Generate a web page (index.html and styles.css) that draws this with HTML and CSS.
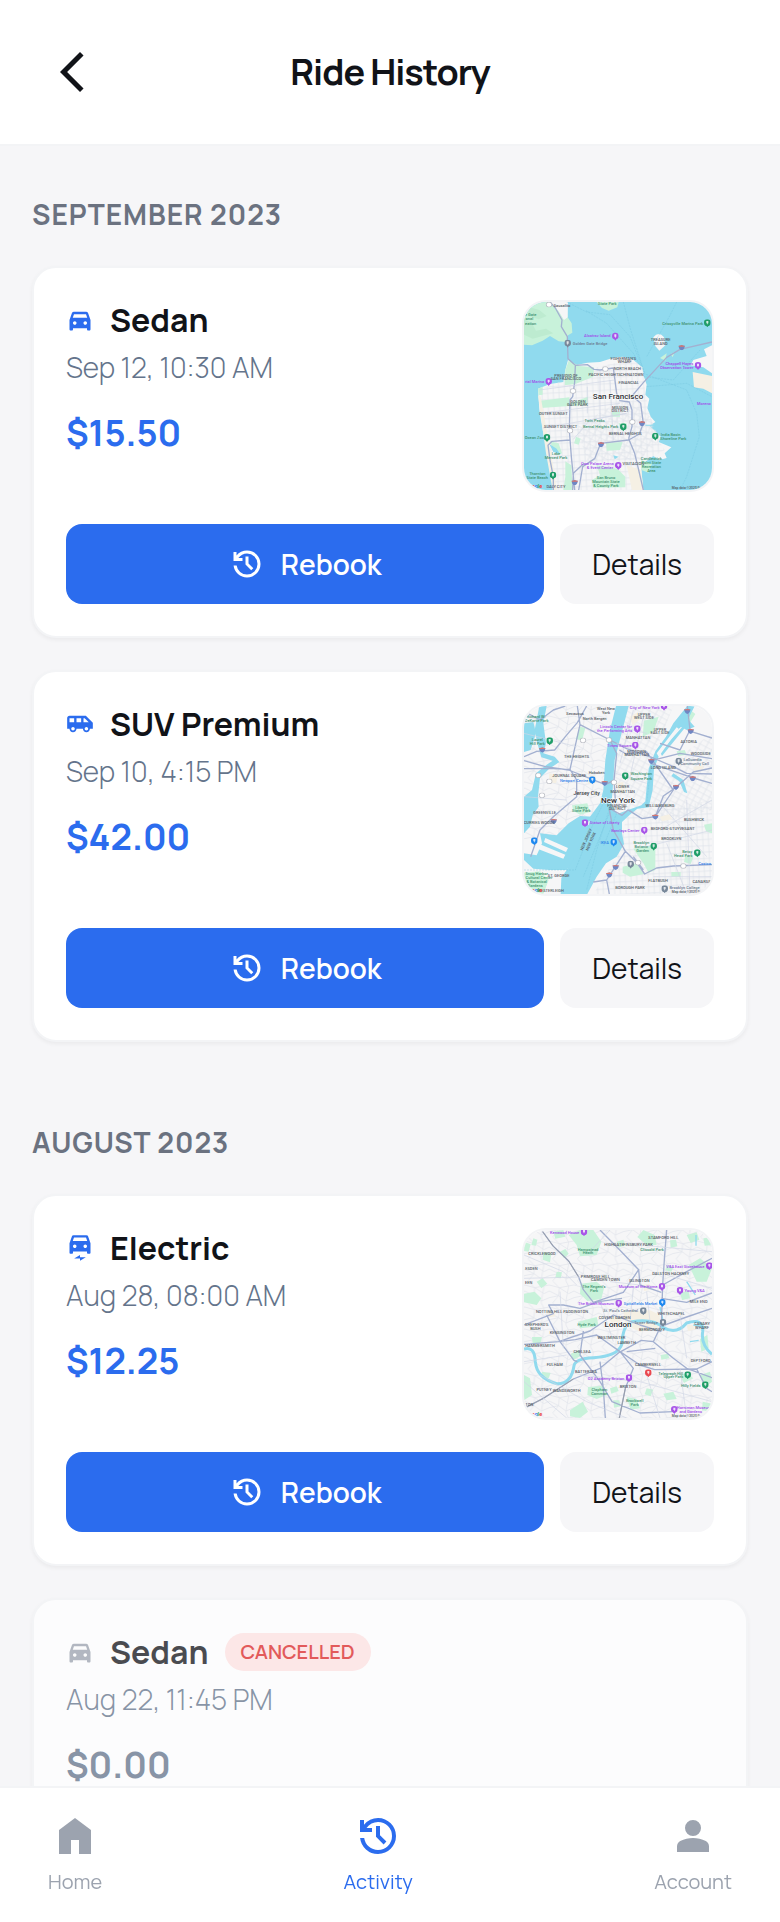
FILE: index.html
```html
<!DOCTYPE html>
<html lang="en">
<head>
    <meta charset="UTF-8">
    <meta name="viewport" content="width=device-width, initial-scale=1.0">
    <title>Ride History</title>
    <link rel="stylesheet" href="styles.css">
</head>
<body>
    <!-- Shared icons and street patterns -->
    <svg class="sprite" aria-hidden="true">
        <symbol id="icon-history" viewBox="0 0 24 24">
            <path d="M12 21q-3.45 0-6.012-2.287T3.05 13H5.1q.35 2.6 2.313 4.3T12 19q2.925 0 4.963-2.037T19 12t-2.037-4.962T12 5q-1.725 0-3.225.8T6.25 8H9v2H3V4h2v2.35q1.275-1.6 3.113-2.475T12 3q1.875 0 3.513.713t2.85 1.924 1.925 2.85T21 12t-.712 3.513-1.925 2.85-2.85 1.925T12 21m2.8-4.8L11 12.4V7h2v4.6l3.2 3.2z"/>
        </symbol>
        <symbol id="icon-car" viewBox="0 0 24 24">
            <path d="M6 19v1q0 .425-.287.713T5 21H4q-.425 0-.712-.288T3 20v-8l2.1-6q.15-.45.538-.725T6.5 5h11q.475 0 .863.275T18.9 6l2.1 6v8q0 .425-.287.713T20 21h-1q-.425 0-.712-.288T18 20v-1zm-.2-9h12.4l-1.05-3H6.85zm1.7 6q.625 0 1.063-.437T9 14.5t-.437-1.062T7.5 13t-1.062.438T6 14.5t.438 1.063T7.5 16m9 0q.625 0 1.063-.437T18 14.5t-.437-1.062T16.5 13t-1.062.438T15 14.5t.438 1.063T16.5 16"/>
        </symbol>
        <symbol id="icon-van" viewBox="0 0 24 24">
            <path d="M17 5H3c-1.1 0-2 .89-2 2v9h2c0 1.65 1.34 3 3 3s3-1.35 3-3h5.5c0 1.65 1.34 3 3 3s3-1.35 3-3H23v-5zM3 10.500V7h4v3.500zm3 7c-.83 0-1.500-.67-1.500-1.500s.67-1.500 1.500-1.500 1.500.67 1.500 1.500-.67 1.500-1.500 1.500m7-7H9V7h4zm4.500 7c-.83 0-1.500-.67-1.500-1.500s.67-1.500 1.500-1.500 1.500.67 1.500 1.500-.67 1.500-1.500 1.500M15 10.500V7h1l3.500 3.500z"/>
        </symbol>
        <symbol id="icon-electric" viewBox="0 0 24 24">
            <path d="M6 15v1q0 .425-.287.713T5 17H4q-.425 0-.712-.288T3 16V8l2.1-6q.15-.45.538-.725T6.5 1h11q.475 0 .863.275T18.9 2L21 8v8q0 .425-.287.713T20 17h-1q-.425 0-.712-.288T18 16v-1zm-.2-9h12.4l-1.05-3H6.85zm1.7 6q.625 0 1.063-.437T9 10.5t-.437-1.062T7.5 9t-1.062.438T6 10.5t.438 1.063T7.5 12m9 0q.625 0 1.063-.437T18 10.5t-.437-1.062T16.5 9t-1.062.438T15 10.5t.438 1.063T16.5 12M7 21l5-3v2h5l-5 3v-2z"/>
        </symbol>
        <symbol id="shield" viewBox="0 0 20 16">
            <path fill="#6f87c4" d="M1 2q4 1 9-2 5 3 9 2 1 10-9 14Q0 12 1 2"/>
            <path fill="#d9776e" d="M1 2q4 1 9-2 5 3 9 2v3H1z"/>
        </symbol>
        <symbol id="route" viewBox="0 0 20 16">
            <rect x="2" y="1" width="16" height="14" rx="6" fill="#fff" stroke="#a4a8b0" stroke-width="2"/>
        </symbol>
        <symbol id="pin" viewBox="0 0 20 24">
            <circle cx="10" cy="10" r="10"/>
            <path d="M5 17h10l-5 7z"/>
            <path fill="#fff" fill-opacity=".8" d="M7 5h6v7h-2v3H9v-3H7z"/>
        </symbol>
        <defs>
            <pattern id="streets" width="17" height="19" patternUnits="userSpaceOnUse" patternTransform="rotate(-3)">
                <path class="street" d="M0 5H17M6 0V19"/>
            </pattern>
            <pattern id="streets-tilted" width="20" height="16" patternUnits="userSpaceOnUse" patternTransform="rotate(28)">
                <path class="street" d="M0 5H20M6 0V16"/>
            </pattern>
            <pattern id="streets-loose" width="74" height="66" patternUnits="userSpaceOnUse">
                <path class="street" d="M0 12L30 20 74 12M0 50L28 44 50 60 74 50M10 0L30 20 28 44 10 66M50 0L58 16 50 60 50 66M30 20L58 38 74 30M0 30L28 44"/>
            </pattern>
        </defs>
    </svg>

    <header class="header">
        <button class="back-btn" type="button" aria-label="Back">
            <svg viewBox="0 0 24 24" aria-hidden="true"><path d="M16 22 6 12 16 2l1.775 1.775L9.55 12l8.225 8.225z"/></svg>
        </button>
        <h1>Ride History</h1>
    </header>

    <main class="content">
        <section class="month">
            <h2>September 2023</h2>

            <article class="card">
                <div class="card-top">
                    <div class="ride-info">
                        <div class="ride-title">
                            <svg class="ride-icon" aria-hidden="true"><use href="#icon-car"/></svg>
                            <h3>Sedan</h3>
                        </div>
                        <p class="ride-date">Sep 12, 10:30 AM</p>
                        <p class="ride-price">$15.50</p>
                    </div>
                    <svg class="map" viewBox="72 66 564 564" role="img" aria-label="Map of San Francisco">
                        <rect class="water" x="72" y="66" width="564" height="564"/>
                        <!-- Marin headlands -->
                        <path class="park" d="M72 66H200L203 112 215 130 217 158 204 166 198 186 176 184 150 168 128 182 96 196 72 194z"/>
                        <path class="land" d="M152 66H204L203 112 192 120 176 94z"/>
                        <path class="park" d="M290 66H356L352 82 326 92 306 84z"/>
                        <path fill="#bdebd0" d="M72 118L96 130 108 152 138 146 160 160 128 168 98 176 72 164zM84 80L118 90 140 108 116 118 88 108z"/>
                        <!-- City peninsula -->
                        <path class="land" d="M204 240L226 256 262 248 300 246 338 234 368 230 398 238 414 252 428 262 432 290 440 314 436 344 448 356 442 384 452 410 466 426 448 438 464 452 482 470 476 486 514 502 494 520 500 534 478 540 460 528 444 540 430 548 424 570 430 630H160L152 570 140 510 128 450 118 390 114 326 150 312 190 306 196 270z"/>
                        <path fill="url(#streets)" d="M190 300L262 268 398 238 428 262 436 344 452 410 470 470 494 510 424 550 424 630H170L130 450 116 330z"/>
                        <path fill="url(#streets-tilted)" d="M230 440L380 350 450 410 480 480 420 540 260 540z"/>
                        <path class="park" d="M120 362L208 352 210 370 264 350 264 376 208 378 122 384zM196 270L206 242 240 258 282 262 280 290 226 312 194 316zM114 326L128 320 128 344 116 346zM150 484L176 490 186 520 174 526 160 512zM318 488L368 486 360 510 320 512zM290 556L352 566 376 590 376 622 280 624 276 600 300 586zM424 540L456 552 446 578 424 570zM196 544L214 556 218 630 190 630 196 590zM356 430L380 430 380 448 360 446zM336 396h24v14h-24zM228 470l14 6-6 18-14-4z"/>
                        <path class="sand" d="M114 346L122 350 160 560 170 630H158L138 520zM380 556L424 570 430 630H396z"/>
                        <path class="water" d="M148 492L170 506 180 522 160 516zM436 434h30v3h-30zM340 526l16 4-12 8z"/>
                        <path class="land" d="M460 172Q476 152 492 172L496 196 478 212 466 198z"/>
                        <path class="land" d="M636 196L612 208 620 228 580 240 572 256 610 262 636 280z"/>
                        <path class="sand" d="M578 276L636 288V340L610 326 582 322z"/>
                        <path class="park" d="M500 220l-20 14 16 8zM524 216l-12 6 6 10z"/>
                        <g class="ferry">
                            <path d="M200 66L260 96 330 104 390 170 430 270M370 66L392 150 434 280M258 92L320 130 400 220 432 276M530 66L508 110 440 230M430 290L520 300 600 210M430 280L560 330 590 400 598 470 560 590 540 630M440 320L560 310 636 350"/>
                        </g>
                        <path class="road" d="M150 66L166 84 186 120 184 140 202 170 204 236 226 256 262 254 282 268 300 270 340 264 350 340 360 362 388 366 396 390 396 440 386 476M226 258L224 306 218 350 210 360 208 452 214 530 224 630M396 348L430 308 500 232 540 208 636 186M400 350L422 370 430 430 418 462 386 480 302 490 284 536 248 560 236 630M386 476L404 520 416 570 430 630M210 480L156 484 144 496 150 540 160 590 160 630M252 550L220 580 218 630"/>
                        <g class="road-minor">
                            <path d="M118 330L344 300M120 400L360 370M128 444L380 400M220 478L270 420 380 400M262 320V400M300 272V420M330 300L340 480"/>
                        </g>
                        <use href="#route" x="306" y="259" width="20" height="16"/>
                        <use href="#route" x="209" y="325" width="20" height="16"/>
                        <use href="#route" x="200" y="444" width="20" height="16"/>
                        <use href="#route" x="387" y="418" width="20" height="16"/>
                        <use href="#route" x="137" y="66" width="20" height="16"/>
                        <use href="#shield" x="535" y="195" width="20" height="16"/>
                        <use href="#shield" x="416" y="423" width="20" height="16"/>
                        <use href="#shield" x="293" y="486" width="20" height="16"/>
                        <use href="#shield" x="214" y="600" width="20" height="16"/>
                        <g class="pins-purple">
                            <use href="#pin" x="336" y="156" width="20" height="28"/>
                            <use href="#pin" x="136" y="294" width="20" height="24"/>
                            <use href="#pin" x="584" y="246" width="20" height="24"/>
                            <use href="#pin" x="345" y="546" width="20" height="24"/>
                        </g>
                        <g class="pins-green">
                            <use href="#pin" x="612" y="118" width="20" height="24"/>
                            <use href="#pin" x="360" y="430" width="20" height="24"/>
                            <use href="#pin" x="456" y="458" width="20" height="24"/>
                            <use href="#pin" x="131" y="462" width="20" height="24"/>
                            <use href="#pin" x="149" y="575" width="20" height="24"/>
                        </g>
                        <use class="pin-gray" href="#pin" x="193" y="179" width="20" height="24"/>
                        <g class="label">
                            <text x="186" y="80">Sausalito</text>
                            <text class="green" x="322" y="75">State Park</text>
                            <text class="green" x="92" y="108">e Gate</text>
                            <text class="green" x="88" y="121">onal</text>
                            <text class="green" x="92" y="134">eation</text>
                            <text class="purple" x="292" y="172">Alcatraz Island</text>
                            <text class="gray" x="270" y="195">Golden Gate Bridge</text>
                            <text class="green" x="548" y="135">Crissyville Marina Park</text>
                            <text x="482" y="184">TREASURE</text>
                            <text x="482" y="195">ISLAND</text>
                            <text class="purple" x="538" y="255">Chappell Hayes</text>
                            <text class="purple" x="530" y="267">Observation Tower</text>
                            <text class="purple" x="104" y="310">rial Marina</text>
                            <text class="purple" x="612" y="376">Moreno</text>
                            <text x="370" y="240">FISHERMAN'S</text>
                            <text x="374" y="250">WHARF</text>
                            <text x="382" y="271">NORTH BEACH</text>
                            <text x="314" y="289">PACIFIC HEIGHTS</text>
                            <text x="396" y="289">CHINATOWN</text>
                            <text x="198" y="290">PRESIDIO OF</text>
                            <text x="198" y="300">SAN FRANCISCO</text>
                            <text x="386" y="311">FINANCIAL</text>
                            <text x="234" y="368">GOLDEN</text>
                            <text x="232" y="378">GATE PARK</text>
                            <text x="360" y="386">MISSION</text>
                            <text x="360" y="396">DISTRICT</text>
                            <text x="160" y="404">OUTER SUNSET</text>
                            <text x="182" y="444">SUNSET DISTRICT</text>
                            <text class="green" x="284" y="427">Twin Peaks</text>
                            <text class="green" x="302" y="445">Bernal Heights Park</text>
                            <text x="376" y="466">BERNAL HEIGHTS</text>
                            <text class="green" x="512" y="468">India Basin</text>
                            <text class="green" x="520" y="480">Shoreline Park</text>
                            <text class="green" x="103" y="478">Ocean Zoo</text>
                            <text class="green" x="168" y="524">Lake</text>
                            <text class="green" x="168" y="536">Merced Park</text>
                            <text class="purple" x="292" y="556">Cow Palace Arena</text>
                            <text class="purple" x="300" y="568">&amp; Event Center</text>
                            <text x="400" y="556">VISITACION</text>
                            <text class="green" x="454" y="540">Candlestick</text>
                            <text class="green" x="454" y="552">Point State</text>
                            <text class="green" x="454" y="564">Recreation</text>
                            <text class="green" x="454" y="576">Area</text>
                            <text class="green" x="112" y="585">Thornton</text>
                            <text class="green" x="112" y="597">State Beach</text>
                            <text class="green" x="318" y="596">San Bruno</text>
                            <text class="green" x="318" y="608">Mountain State</text>
                            <text class="green" x="318" y="620">&amp; County Park</text>
                            <text x="168" y="625">DALY CITY</text>
                            <text class="credit" x="570" y="626">Map data ©2025 Google</text>
                        </g>
                        <text class="google" x="86" y="625"><tspan fill="#ea4335">oo</tspan><tspan fill="#4285f4">g</tspan><tspan fill="#34a853">l</tspan><tspan fill="#ea4335">e</tspan></text>
                        <text class="city" x="354" y="356">San Francisco</text>
                    </svg>
                </div>
                <div class="card-actions">
                    <button class="btn btn-primary" type="button">
                        <svg aria-hidden="true"><use href="#icon-history"/></svg>
                        Rebook
                    </button>
                    <button class="btn btn-secondary" type="button">Details</button>
                </div>
            </article>

            <article class="card">
                <div class="card-top">
                    <div class="ride-info">
                        <div class="ride-title">
                            <svg class="ride-icon" aria-hidden="true"><use href="#icon-van"/></svg>
                            <h3>SUV Premium</h3>
                        </div>
                        <p class="ride-date">Sep 10, 4:15 PM</p>
                        <p class="ride-price">$42.00</p>
                    </div>
                    <svg class="map" viewBox="72 48 564 564" role="img" aria-label="Map of New York">
                        <rect class="land" x="72" y="48" width="564" height="564"/>
                        <rect fill="url(#streets-loose)" x="72" y="48" width="250" height="400"/>
                        <path fill="url(#streets-tilted)" d="M356 48H520L440 250 400 350 340 360 336 220zM440 270L636 130V360L480 400 380 360z"/>
                        <path fill="url(#streets)" d="M380 380L636 330V612H280L350 500z"/>
                        <path class="park" d="M432 92L476 80 460 126 428 140zM400 476L466 464 466 540 446 548 430 520zM368 530L410 520 432 552 390 560 368 548zM72 548L120 544 146 570 130 612H72zM240 110l16 4-10 38-18-6zM530 184l24-4 6 14-26 4zM612 404l24-4v30l-18-6zM514 546h28v14h-28zM556 496l24 6-8 20-20-6zM556 94l20-30 10 8-16 26z"/>
                        <path class="sand" d="M388 80l26-14 8 20-24 20zM350 280l20-4 4 30-20 4zM480 380l30-8 6 16-30 6zM580 230l30-4v14l-28 4zM148 250l26 6-6 24-22-4zM260 260l26-6 2 24-24 4z"/>
                        <!-- Hudson and upper bay -->
                        <path class="water" d="M348 48H386L362 140 344 210 338 300 334 346 352 372 384 360 424 346 436 334 440 290 446 236 466 184 498 140 520 100 552 60 562 48H584L560 96 530 122 480 190 462 236 458 300 446 352 412 356 392 372 366 396 366 430 372 462 350 500 318 520 290 560 262 612H182L184 564 200 540 214 510 200 476 232 440 270 380 300 340 310 300 316 210 330 120z"/>
                        <!-- Newark bay and the port -->
                        <path class="water" d="M118 48H140L130 100 138 160 130 190 164 200 178 216 146 238 120 264 114 320 116 350 98 376 90 410 72 430V320L96 300 108 250 140 224 158 212 124 202 112 160 104 120z"/>
                        <path class="water" d="M120 430L170 436 206 400 240 378 280 380 240 460 220 510 200 540 150 540 100 536 72 510V490L110 496 126 460z"/>
                        <path class="land" d="M136 444L204 474 198 486 132 456zM118 462L196 494 190 506 112 476z"/>
                        <path class="park" d="M216 346L262 340 270 366 240 374 220 362z"/>
                        <path class="water" d="M72 100L100 96 108 130 92 180 72 186zM534 84l30 4 20 22-24 10-26-14zM480 186L560 96 564 102 486 198zM520 250l30 20 12 40-10-4-14-32-24-16z"/>
                        <path class="land" d="M470 190L530 112 536 116 476 200zM258 398l12-6-4 14z"/>
                        <g class="ferry">
                            <path d="M72 540H226L280 400 310 340M340 340L300 440 250 560M330 350L290 480 260 600M350 370L310 470M452 230L440 340"/>
                        </g>
                        <path class="road" d="M72 64L120 90 160 60 196 48M72 200L110 184 164 180 196 140 232 98 260 48M232 48L240 104 330 150 380 176 460 204 520 230 560 250 636 252M240 104L210 238 230 270 230 320 160 380 120 420 92 500M72 212L136 230 206 240 316 284 340 272M72 236L160 236 210 238M330 150L350 190 342 270 346 330M358 180L378 192 440 186 520 300 466 380 426 386 384 360 366 376 330 356M386 360L420 382M636 234L580 246 528 292 490 318 466 380M328 360L340 420 376 484 412 520 434 552 470 534 520 528 636 524M376 484L346 530 320 570 280 576M400 500L430 540M562 48L570 120 540 180 480 160M572 124L636 144M454 212L540 190 636 206M452 220L540 250 580 264 636 280M320 570L328 612"/>
                        <g class="road-minor">
                            <path d="M360 110L440 130M350 160L430 190M346 250L440 280M440 470L636 420M480 340L620 500M560 330L570 612M636 330L480 420M460 560L636 560M500 460L560 612M72 130L230 170M72 320L200 330M400 60L360 220M430 80L390 260"/>
                        </g>
                        <use href="#shield" x="117" y="172" width="20" height="16"/>
                        <use href="#shield" x="304" y="272" width="20" height="16"/>
                        <use href="#shield" x="151" y="386" width="20" height="16"/>
                        <use href="#shield" x="456" y="373" width="20" height="16"/>
                        <use href="#shield" x="444" y="206" width="20" height="16"/>
                        <use href="#shield" x="552" y="56" width="20" height="16"/>
                        <use href="#shield" x="562" y="116" width="20" height="16"/>
                        <use href="#shield" x="518" y="284" width="20" height="16"/>
                        <use href="#shield" x="568" y="258" width="20" height="16"/>
                        <use href="#shield" x="318" y="547" width="20" height="16"/>
                        <use href="#shield" x="337" y="524" width="20" height="16"/>
                        <use href="#route" x="239" y="143" width="20" height="16"/>
                        <use href="#route" x="317" y="142" width="20" height="16"/>
                        <use href="#route" x="332" y="269" width="20" height="16"/>
                        <use href="#route" x="105" y="248" width="20" height="16"/>
                        <use href="#route" x="138" y="266" width="20" height="16"/>
                        <use href="#route" x="116" y="308" width="20" height="16"/>
                        <use href="#route" x="404" y="510" width="20" height="16"/>
                        <use href="#route" x="540" y="520" width="20" height="16"/>
                        <g class="pins-purple">
                            <use href="#pin" x="482" y="38" width="20" height="24"/>
                            <use href="#pin" x="402" y="106" width="20" height="24"/>
                            <use href="#pin" x="396" y="155" width="20" height="24"/>
                            <use href="#pin" x="245" y="388" width="20" height="24"/>
                            <use href="#pin" x="423" y="410" width="20" height="24"/>
                        </g>
                        <g class="pins-green">
                            <use href="#pin" x="139" y="142" width="20" height="24"/>
                            <use href="#pin" x="366" y="247" width="20" height="24"/>
                            <use href="#pin" x="451" y="458" width="20" height="24"/>
                            <use href="#pin" x="582" y="478" width="20" height="24"/>
                        </g>
                        <g class="pins-blue">
                            <use href="#pin" x="267" y="259" width="20" height="24"/>
                            <use href="#pin" x="93" y="442" width="20" height="24"/>
                            <use href="#pin" x="331" y="446" width="20" height="24"/>
                        </g>
                        <g class="pin-gray">
                            <use href="#pin" x="526" y="203" width="20" height="24"/>
                            <use href="#pin" x="382" y="512" width="20" height="24"/>
                            <use href="#pin" x="484" y="586" width="20" height="24"/>
                        </g>
                        <g class="label">
                            <text x="225" y="75">Secaucus</text>
                            <text x="318" y="60">West New</text>
                            <text x="318" y="73">York</text>
                            <text x="284" y="91">North Bergen</text>
                            <text class="purple" x="434" y="58">City of New York</text>
                            <text class="green" x="108" y="84">Richard W.</text>
                            <text class="green" x="110" y="95">DeKorte Park</text>
                            <text x="432" y="78">UPPER</text>
                            <text x="432" y="88">WEST SIDE</text>
                            <text class="purple" x="348" y="115">Lincoln Center for</text>
                            <text class="purple" x="344" y="127">the Performing Arts</text>
                            <text x="480" y="122">UPPER</text>
                            <text x="480" y="132">EAST SIDE</text>
                            <text x="414" y="146">MANHATTAN</text>
                            <text class="green" x="112" y="154">Laurel</text>
                            <text class="green" x="112" y="164">Hill Park</text>
                            <text class="purple" x="358" y="170">Times Square</text>
                            <text x="410" y="188">MIDTOWN</text>
                            <text x="410" y="198">MANHATTAN</text>
                            <text x="566" y="160">ASTORIA</text>
                            <text x="602" y="196">WOODSIDE</text>
                            <text x="230" y="204">THE HEIGHTS</text>
                            <text class="gray" x="578" y="213">LaGuardia</text>
                            <text class="gray" x="584" y="224">Community Coll</text>
                            <text x="490" y="236">LONG ISLAND</text>
                            <text x="290" y="253">Hoboken</text>
                            <text x="208" y="260">JOURNAL SQUARE</text>
                            <text class="blue" x="222" y="275">Newport Centre</text>
                            <text class="green" x="424" y="256">Washington</text>
                            <text class="green" x="424" y="269">Square Park</text>
                            <text x="368" y="294">LOWER</text>
                            <text x="368" y="308">MANHATTAN</text>
                            <text class="big" x="260" y="314">Jersey City</text>
                            <text x="352" y="350">FINANCIAL</text>
                            <text x="352" y="360">DISTRICT</text>
                            <text x="480" y="350">WILLIAMSBURG</text>
                            <text class="green" x="244" y="356">Liberty</text>
                            <text class="green" x="244" y="367">State Park</text>
                            <text x="134" y="372">GREENVILLE</text>
                            <text x="118" y="401">CURRIES WOODS</text>
                            <text class="purple" x="314" y="403">Statue of Liberty</text>
                            <text class="purple" x="376" y="426">Barclays Center</text>
                            <text x="518" y="420">BEDFORD-STUYVESANT</text>
                            <text x="582" y="392">BUSHWICK</text>
                            <text x="514" y="451">BROOKLYN</text>
                            <text class="blue" x="314" y="461">IKEA</text>
                            <text class="green" x="424" y="461">Brooklyn</text>
                            <text class="green" x="424" y="473">Botanic</text>
                            <text class="green" x="428" y="485">Garden</text>
                            <text class="green" x="562" y="490">Betsy</text>
                            <text class="green" x="550" y="501">Head Park</text>
                            <text transform="translate(262 450) rotate(-66)">NEW JERSEY</text>
                            <text transform="translate(276 456) rotate(-66)">NEW YORK</text>
                            <text class="blue" x="614" y="526">Costco</text>
                            <text x="474" y="576">FLATBUSH</text>
                            <text x="390" y="598">BOROUGH PARK</text>
                            <text x="606" y="580">CANARSIE</text>
                            <text class="green" x="110" y="554">Snug Harbor</text>
                            <text class="green" x="117" y="566">Cultural Center</text>
                            <text class="green" x="110" y="578">&amp; Botanical</text>
                            <text class="green" x="106" y="590">Gardens</text>
                            <text x="176" y="562">ST. GEORGE</text>
                            <text x="152" y="606">WESTERLEIGH</text>
                            <text class="gray" x="554" y="598">Brooklyn College</text>
                            <text class="credit" x="570" y="609">Map data ©2025 Google</text>
                        </g>
                        <text class="google" x="86" y="607"><tspan fill="#ea4335">oo</tspan><tspan fill="#4285f4">g</tspan><tspan fill="#34a853">l</tspan><tspan fill="#ea4335">e</tspan></text>
                        <text class="city" x="354" y="338">New York</text>
                    </svg>
                </div>
                <div class="card-actions">
                    <button class="btn btn-primary" type="button">
                        <svg aria-hidden="true"><use href="#icon-history"/></svg>
                        Rebook
                    </button>
                    <button class="btn btn-secondary" type="button">Details</button>
                </div>
            </article>
        </section>

        <section class="month">
            <h2>August 2023</h2>

            <article class="card">
                <div class="card-top">
                    <div class="ride-info">
                        <div class="ride-title">
                            <svg class="ride-icon" aria-hidden="true"><use href="#icon-electric"/></svg>
                            <h3>Electric</h3>
                        </div>
                        <p class="ride-date">Aug 28, 08:00 AM</p>
                        <p class="ride-price">$12.25</p>
                    </div>
                    <svg class="map" viewBox="72 45 564 564" role="img" aria-label="Map of London">
                        <rect class="land" x="72" y="45" width="564" height="564"/>
                        <rect fill="url(#streets-loose)" x="72" y="45" width="564" height="564"/>
                        <path class="park" d="M206 60L240 45H280L304 80 290 120 240 124 230 90zM242 206L290 200 312 220 304 252 262 258 240 236zM234 320L290 306 296 334 240 340zM412 66L430 45 464 60 470 90 440 90zM566 150L600 130 636 160 620 200 590 200zM72 236L104 230 124 250 110 270 72 262zM96 366L126 366 122 384 98 384zM264 516L310 512 320 540 290 552 262 540zM210 586L248 560 264 590 240 609 210 604zM380 546L410 552 420 580 392 584zM490 536L520 530 530 552 500 556zM538 480L560 474 580 490 552 504zM600 480L630 470 636 500 612 520zM72 480L90 490 96 540 72 556zM600 372L622 360 626 400 604 410zM130 110l24 6-4 26-22-8zM160 50l30-5 6 20-30 6zM350 80l20-6 6 16-20 8zM510 76l18-2 4 20-20 4zM540 232l26-4 4 22-24 6zM330 520l20-6 6 14-22 8zM440 520l20 4-8 20-18-6zM212 416l24-10 8 16-26 14zM340 556l18 0 4 18-20 4zM608 560l28 6v24l-30-4zM170 170l16 2-4 18-16-2zM100 70l12 4-4 18-14-2zM482 420l22-4 4 14-24 4zM110 200l18-10 14 16-18 14zM180 110l16-8 10 14-14 14zM72 80l20 8-6 22-14-2zM126 470l26 4-6 16-22-4zM560 60l30-8 8 22-26 10zM610 70l26-4v24l-22 2zM500 150l20 6-6 14-18-4z"/>
                        <path class="sand" d="M370 290L450 286 480 300 476 340 420 350 376 330zM330 310l30-10 6 30-30 10zM560 330l20 0 4 14-20 4zM140 290l24 0 2 14-24 4zM430 210l18-4 4 18-20 4z"/>
                        <path class="river" d="M72 402Q104 392 106 440 110 490 170 506 214 508 222 452 226 430 280 428 356 424 366 386 368 330 396 320 460 310 490 338 530 360 560 324 612 308 608 350 602 390 636 418"/>
                        <path class="river-thin" d="M570 380L596 376M580 330L616 336M586 240L560 200M588 92V60M480 276L492 330"/>
                        <path class="road" d="M72 62L108 45M128 50L160 94 206 138 236 186 250 224 280 262 366 250M300 45L360 106 416 164 420 210 484 232M416 164L370 232 280 262M500 45L494 120 488 210 484 330 460 380 520 430 560 460 636 488M72 330L160 296 146 270 190 270 240 280 296 260M72 388L176 380 270 348 340 300 420 330 484 350M140 300L180 380 222 436 232 440M176 380L226 374 290 360 360 410 420 450 464 464 590 462 636 440M72 580L130 550 220 492 300 460 358 412 424 376 460 380M250 348L240 420 300 500 336 560 420 594 520 590M360 410L400 460 376 520 358 609M300 440L310 520 316 609M380 410L466 400M484 250L560 262 636 234M494 330L560 306 636 280M590 462L620 520 636 530M488 210L560 170 636 130"/>
                        <path class="rail" d="M128 50L160 94 206 138 236 186M72 580L130 550 220 492M376 520L358 609"/>
                        <g class="road-minor">
                            <path d="M72 120L190 170 230 210M72 190L240 186M260 120L330 45M330 200L420 210M420 90L636 110M500 180L636 220M72 440L200 420M120 480L260 560 380 609M240 480L420 500 636 560M440 480L480 609M540 460L560 609M300 260L340 380M400 220L390 320M440 230L450 320M180 230L190 400M540 300L560 430M72 500L200 609"/>
                        </g>
                        <g class="pins-purple">
                            <use href="#pin" x="242" y="40" width="20" height="24"/>
                            <use href="#pin" x="618" y="142" width="20" height="24"/>
                            <use href="#pin" x="476" y="204" width="20" height="24"/>
                            <use href="#pin" x="530" y="216" width="20" height="24"/>
                            <use href="#pin" x="346" y="254" width="20" height="24"/>
                            <use href="#pin" x="377" y="478" width="20" height="24"/>
                            <use href="#pin" x="513" y="573" width="20" height="24"/>
                        </g>
                        <g class="pins-green">
                            <use href="#pin" x="553" y="469" width="20" height="24"/>
                            <use href="#pin" x="606" y="499" width="20" height="24"/>
                        </g>
                        <g class="pins-blue">
                            <use href="#pin" x="477" y="252" width="20" height="24"/>
                        </g>
                        <g class="pin-gray">
                            <use href="#pin" x="420" y="277" width="20" height="24"/>
                            <use href="#pin" x="479" y="312" width="20" height="24"/>
                        </g>
                        <use class="pin-red" href="#pin" x="435" y="463" width="20" height="24"/>
                        <g class="label">
                            <text class="purple" x="194" y="56">Kenwood House</text>
                            <text x="342" y="93">HIGHGATE</text>
                            <text x="414" y="93">FINSBURY PARK</text>
                            <text x="490" y="73">STAMFORD HILL</text>
                            <text class="green" x="264" y="107">Hampstead</text>
                            <text class="green" x="264" y="118">Heath</text>
                            <text class="green" x="456" y="108">Clissold Park</text>
                            <text x="126" y="121">CRICKLEWOOD</text>
                            <text x="94" y="164">ESDEN</text>
                            <text class="purple" x="556" y="158">V&amp;A East Storehouse</text>
                            <text x="512" y="180">DALSTON HACKNEY</text>
                            <text x="286" y="188">PRIMROSE HILL</text>
                            <text x="316" y="199">CAMDEN TOWN</text>
                            <text x="418" y="200">ISLINGTON</text>
                            <text x="86" y="206">EEN</text>
                            <text class="green" x="282" y="220">The Regent's</text>
                            <text class="green" x="282" y="232">Park</text>
                            <text class="purple" x="414" y="220">Museum of the Home</text>
                            <text class="purple" x="584" y="231">Young V&amp;A</text>
                            <text class="purple" x="288" y="270">The British Museum</text>
                            <text class="blue" x="422" y="269">Spitalfields Market</text>
                            <text x="596" y="263">MILE END</text>
                            <text x="186" y="295">NOTTING HILL PADDINGTON</text>
                            <text class="gray" x="362" y="292">St. Paul's Cathedral</text>
                            <text x="514" y="299">WHITECHAPEL</text>
                            <text x="344" y="312">COVENT GARDEN</text>
                            <text class="gray" x="438" y="328">Tower Bridge</text>
                            <text class="green" x="260" y="333">Hyde Park</text>
                            <text x="110" y="333">SHEPHERD'S</text>
                            <text x="106" y="344">BUSH</text>
                            <text x="606" y="330">CANARY</text>
                            <text x="606" y="341">WHARF</text>
                            <text x="456" y="348">BERMONDSEY</text>
                            <text x="186" y="356">KENSINGTON</text>
                            <text x="334" y="371">WESTMINSTER</text>
                            <text x="380" y="388">LAMBETH</text>
                            <text x="120" y="397">HAMMERSMITH</text>
                            <text x="246" y="415">CHELSEA</text>
                            <text x="164" y="454">FULHAM</text>
                            <text x="444" y="454">CAMBERWELL</text>
                            <text x="602" y="440">DEPTFORD</text>
                            <text x="258" y="475">BATTERSEA</text>
                            <text class="purple" x="318" y="494">O2 Academy Brixton</text>
                            <text class="green" x="512" y="479">Telegraph Hill</text>
                            <text class="green" x="520" y="490">Upper Park</text>
                            <text class="green" x="572" y="515">Hilly Fields</text>
                            <text x="132" y="527">PUTNEY</text>
                            <text x="200" y="531">WANDSWORTH</text>
                            <text class="green" x="298" y="528">Clapham</text>
                            <text class="green" x="298" y="539">Common</text>
                            <text x="384" y="520">BRIXTON</text>
                            <text class="green" x="404" y="561">Brockwell</text>
                            <text class="green" x="404" y="573">Park</text>
                            <text x="88" y="573">TON</text>
                            <text class="purple" x="582" y="583">Horniman Museum</text>
                            <text class="purple" x="572" y="595">and Gardens</text>
                            <text class="credit" x="570" y="606">Map data ©2025 Google</text>
                        </g>
                        <text class="google" x="86" y="604"><tspan fill="#ea4335">oo</tspan><tspan fill="#4285f4">g</tspan><tspan fill="#34a853">l</tspan><tspan fill="#ea4335">e</tspan></text>
                        <text class="city" x="354" y="335">London</text>
                    </svg>
                </div>
                <div class="card-actions">
                    <button class="btn btn-primary" type="button">
                        <svg aria-hidden="true"><use href="#icon-history"/></svg>
                        Rebook
                    </button>
                    <button class="btn btn-secondary" type="button">Details</button>
                </div>
            </article>

            <article class="card cancelled">
                <div class="card-top">
                    <div class="ride-info">
                        <div class="ride-title">
                            <svg class="ride-icon" aria-hidden="true"><use href="#icon-car"/></svg>
                            <h3>Sedan</h3>
                            <span class="badge">Cancelled</span>
                        </div>
                        <p class="ride-date">Aug 22, 11:45 PM</p>
                        <p class="ride-price">$0.00</p>
                    </div>
                </div>
            </article>
        </section>
    </main>

    <nav class="bottom-nav">
        <a href="#">
            <svg viewBox="0 0 24 24" aria-hidden="true"><path d="M4 21V9l8-6 8 6v12h-6v-7h-4v7z"/></svg>
            Home
        </a>
        <a href="#" class="active">
            <svg aria-hidden="true"><use href="#icon-history"/></svg>
            Activity
        </a>
        <a href="#">
            <svg viewBox="0 0 24 24" aria-hidden="true"><path d="M12 12q-1.65 0-2.825-1.175T8 8t1.175-2.825T12 4t2.825 1.175T16 8t-1.175 2.825T12 12m-8 8v-2.8q0-.85.438-1.562T5.6 14.55q1.55-.775 3.15-1.162T12 13t3.25.388 3.15 1.162q.725.375 1.163 1.088T20 17.2V20z"/></svg>
            Account
        </a>
    </nav>
</body>
</html>
```
FILE: styles.css
```css
/* General */
* {
    box-sizing: border-box;
}

body {
    font-family: 'Manrope', 'Inter', sans-serif;
    margin: 0;
    min-height: 100vh;
    background-color: #f6f6f8;
    color: #111318;
}

h1, h2, h3, p {
    margin: 0;
}

button {
    font-family: inherit;
    border: none;
    cursor: pointer;
}

svg {
    fill: currentColor;
    flex-shrink: 0;
}

.sprite {
    position: absolute;
    width: 0;
    height: 0;
}

/* Header */
.header {
    display: grid;
    grid-template-columns: 80px 1fr 80px;
    align-items: center;
    padding: 32px;
    background-color: #fff;
    border-bottom: 2px solid #f3f4f6;
}

.header h1 {
    font-size: 36px;
    line-height: 48px;
    font-weight: 700;
    letter-spacing: -1px;
    text-align: center;
}

.back-btn {
    width: 80px;
    height: 80px;
    padding: 16px;
    background: none;
    color: inherit;
}

.back-btn svg {
    display: block;
    width: 48px;
    height: 48px;
}

/* Ride list */
.content {
    display: flex;
    flex-direction: column;
    gap: 80px;
    padding: 48px 32px 80px;
}

.month {
    display: flex;
    flex-direction: column;
    gap: 32px;
}

.month h2 {
    font-size: 28px;
    line-height: 40px;
    font-weight: 700;
    letter-spacing: 1px;
    text-transform: uppercase;
    color: #6b7280;
}

.card {
    display: flex;
    flex-direction: column;
    gap: 32px;
    padding: 32px;
    background-color: #fff;
    border: 2px solid #f3f4f6;
    border-radius: 24px;
    box-shadow: 0 2px 4px rgba(0, 0, 0, 0.05);
}

.card-top {
    display: flex;
    justify-content: space-between;
    align-items: flex-start;
}

.ride-title {
    display: flex;
    align-items: center;
    gap: 16px;
    height: 40px;
}

.ride-title h3 {
    font-size: 32px;
    line-height: 40px;
    font-weight: 700;
}

.ride-icon {
    width: 28px;
    height: 28px;
    color: #2b6cee;
}

.ride-date {
    margin-top: 7px;
    font-size: 28px;
    line-height: 40px;
    font-weight: 300;
    color: #64748b;
}

.ride-price {
    margin-top: 26px;
    font-size: 36px;
    line-height: 40px;
    font-weight: 700;
    color: #2b6cee;
}

.card-actions {
    display: flex;
    gap: 16px;
}

.btn {
    display: flex;
    align-items: center;
    justify-content: center;
    gap: 16px;
    height: 80px;
    padding: 0 32px;
    border-radius: 16px;
    font-size: 28px;
    line-height: 40px;
}

.btn svg {
    width: 36px;
    height: 36px;
}

.btn-primary {
    flex: 1;
    background-color: #2b6cee;
    color: #fff;
    font-weight: 600;
}

.btn-secondary {
    background-color: #f6f6f8;
    color: #111318;
    font-weight: 400;
}

/* Cancelled ride */
.cancelled {
    opacity: 0.75;
    min-height: 232px;
}

.cancelled .ride-icon {
    color: #9ca3af;
}

.cancelled .ride-price {
    color: #64748b;
}

.badge {
    padding: 4px 16px;
    border-radius: 20px;
    background-color: #fee2e2;
    color: #dc2626;
    font-size: 20px;
    line-height: 30px;
    font-weight: 600;
    text-transform: uppercase;
}

/* Map thumbnails */
.map {
    width: 192px;
    height: 192px;
    border: 2px solid #f3f4f6;
    border-radius: 24px;
}

.land { fill: #f6f6f7; }
.water { fill: #90daee; }
.park { fill: #c8f2da; }
.sand { fill: #f5f0e4; }

.street {
    fill: none;
    stroke: #dfe3ea;
    stroke-width: 2;
}

.road {
    fill: none;
    stroke: #a3b0d0;
    stroke-width: 4;
    stroke-linejoin: round;
}

.road-minor {
    fill: none;
    stroke: #d0d7e5;
    stroke-width: 2;
}

.rail {
    fill: none;
    stroke: #9a9fa8;
    stroke-width: 3;
}

.ferry {
    fill: none;
    stroke: #6dbfdc;
    stroke-width: 1;
    stroke-dasharray: 6 3;
}

.river {
    fill: none;
    stroke: #90daee;
    stroke-width: 9;
}

.river-thin {
    fill: none;
    stroke: #90daee;
    stroke-width: 4;
}

.pins-purple { fill: #a855e8; }
.pins-green { fill: #1f9d68; }
.pins-blue { fill: #1e88f0; }
.pin-gray { fill: #78889a; }
.pin-red { fill: #ea4850; }

.label text {
    font-family: 'Roboto', sans-serif;
    font-size: 12px;
    font-weight: 500;
    text-anchor: middle;
    fill: #555b64;
}

.label .green { fill: #3f9270; }
.label .purple { fill: #a04bea; }
.label .blue { fill: #2f7fe8; }
.label .gray { fill: #6c7c90; }

.label .big {
    font-size: 16px;
    fill: #3c4043;
}

.label .credit {
    font-size: 10px;
}

.city {
    font-family: 'Roboto', sans-serif;
    font-size: 24px;
    font-weight: 500;
    text-anchor: middle;
    fill: #2b2d31;
    stroke: #fff;
    stroke-width: 3;
    paint-order: stroke;
}

.google {
    font-family: 'Roboto', sans-serif;
    font-size: 16px;
    font-weight: 700;
}

/* Bottom navigation */
.bottom-nav {
    position: fixed;
    left: 0;
    right: 0;
    bottom: 0;
    display: flex;
    justify-content: space-between;
    padding: 24px 48px 26px;
    background-color: rgba(255, 255, 255, 0.95);
    backdrop-filter: blur(12px);
    border-top: 2px solid #f3f4f6;
}

.bottom-nav a {
    display: flex;
    flex-direction: column;
    align-items: center;
    gap: 8px;
    font-size: 20px;
    line-height: 28px;
    color: #9ca3af;
    text-decoration: none;
}

.bottom-nav a.active {
    color: #2b6cee;
}

.bottom-nav svg {
    width: 48px;
    height: 48px;
}
```
